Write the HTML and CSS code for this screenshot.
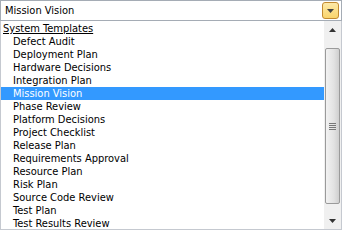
FILE: index.html
```html
<!DOCTYPE html>
<html lang="en">

<head>
    <meta charset="UTF-8">
    <meta name="viewport" content="width=device-width, initial-scale=1.0">
    <title>Templates</title>
    <link rel="stylesheet" href="styles.css">
</head>

<body>
    <div class="combo">
        <div class="value">Mission Vision</div>
        <div class="drop">
            <svg width="7" height="4" viewBox="0 0 7 4"><path d="M0 0H7L3.5 4Z" fill="#444"/></svg>
        </div>
    </div>
    <div class="listbox">
        <ul class="list">
            <li class="group">System Templates</li>
            <li>Defect Audit</li>
            <li>Deployment Plan</li>
            <li>Hardware Decisions</li>
            <li>Integration Plan</li>
            <li class="active">Mission Vision</li>
            <li>Phase Review</li>
            <li>Platform Decisions</li>
            <li>Project Checklist</li>
            <li>Release Plan</li>
            <li>Requirements Approval</li>
            <li>Resource Plan</li>
            <li>Risk Plan</li>
            <li>Source Code Review</li>
            <li>Test Plan</li>
            <li>Test Results Review</li>
        </ul>
        <div class="scroll">
            <div class="arrow">
                <svg width="7" height="4" viewBox="0 0 7 4"><path d="M3.5 0L7 4H0Z" fill="#333"/></svg>
            </div>
            <div class="track">
                <div class="thumb">
                    <span></span><span></span><span></span><span></span>
                </div>
            </div>
            <div class="arrow">
                <svg width="7" height="4" viewBox="0 0 7 4"><path d="M0 0H7L3.5 4Z" fill="#333"/></svg>
            </div>
        </div>
    </div>
</body>

</html>
```

FILE: styles.css
```css
* {
    margin: 0;
    padding: 0;
    list-style: none;
    box-sizing: border-box;
}

body {
    width: 342px;
    height: 231px;
    background: #fff;
    font-family: Tahoma, "DejaVu Sans Condensed", "Liberation Sans", sans-serif;
    font-size: 11px;
    color: #000;
}

.combo {
    height: 21px;
    border: 1px solid #a5acb5;
    display: flex;
    align-items: center;
    padding: 0 2px 0 4px;
}

.combo .value {
    flex: 1;
}

.combo .drop {
    width: 17px;
    height: 17px;
    border: 1px solid #c28a30;
    border-radius: 3px;
    background: linear-gradient(#fde9a8, #f9d46c);
    display: flex;
    align-items: center;
    justify-content: center;
}

.listbox {
    height: 209px;
    border: 1px solid #c5c9d0;
    border-top: none;
    display: flex;
}

.list {
    flex: 1;
    padding-top: 1px;
}

.list li {
    height: 13px;
    line-height: 13px;
    padding-left: 12px;
    white-space: nowrap;
}

.list li.group {
    padding-left: 2px;
    text-decoration: underline;
}

.list li.active {
    background-color: #3399ff;
    color: #fff;
}

.scroll {
    width: 17px;
    background: #f0f0f0;
    display: flex;
    flex-direction: column;
}

.scroll .arrow {
    height: 17px;
    display: flex;
    align-items: center;
    justify-content: center;
}

.scroll .track {
    flex: 1;
    padding: 10px 0 8px;
}

.thumb {
    height: 100%;
    margin: 0 1px;
    border: 1px solid #9a9a9a;
    border-radius: 2px;
    background: linear-gradient(90deg, #f2f2f2, #e2e2e2 60%, #cfcfcf);
    display: flex;
    flex-direction: column;
    align-items: center;
    justify-content: center;
    gap: 1px;
}

.thumb span {
    width: 7px;
    height: 1px;
    background: #777;
}
```
